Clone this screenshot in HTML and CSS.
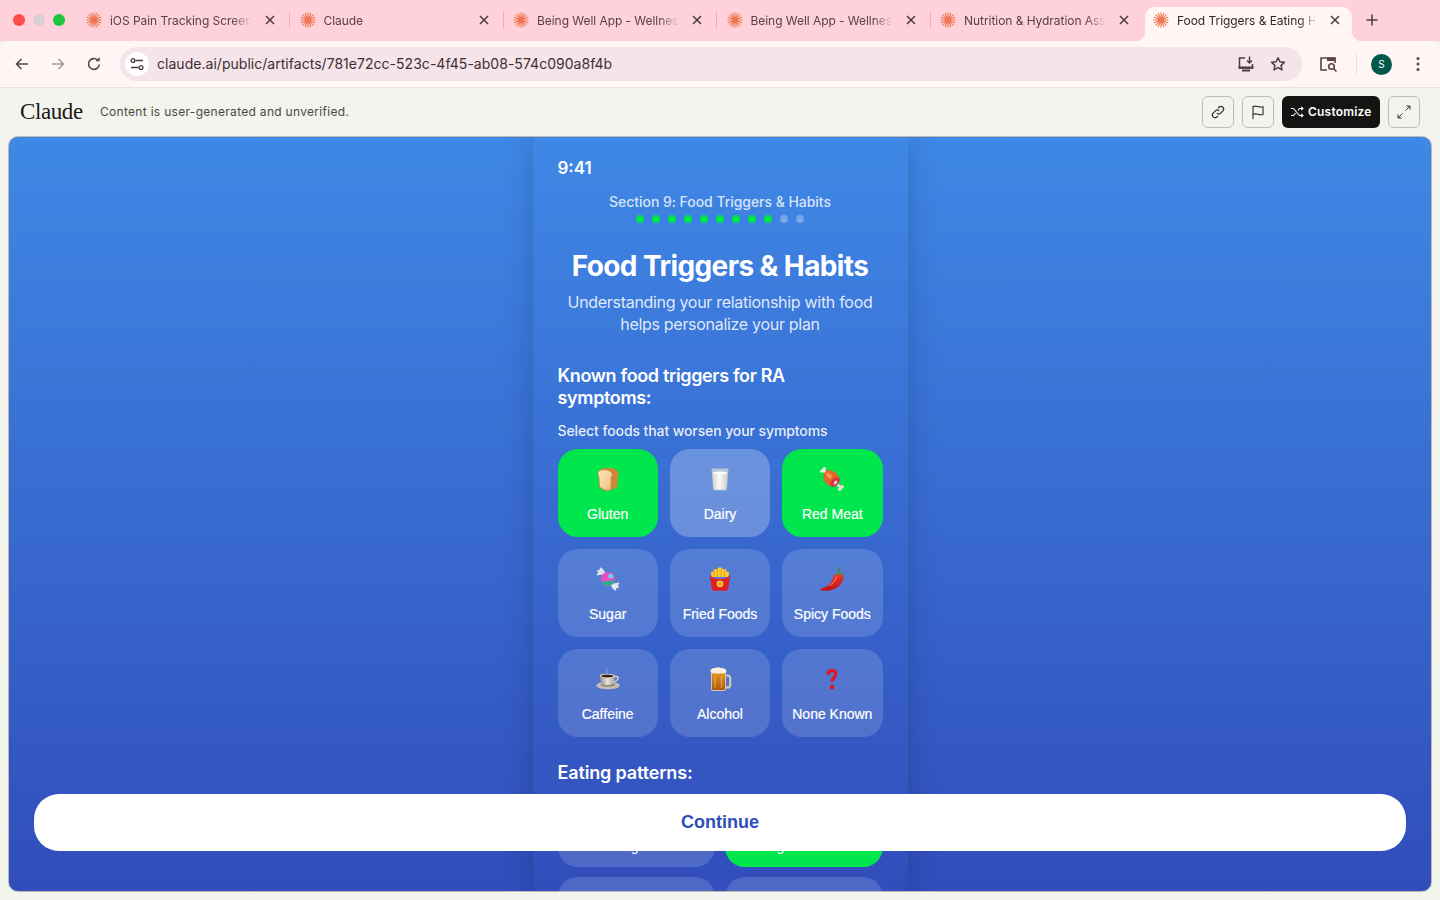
FILE: index.html
```html
<!DOCTYPE html>
<html lang="en">
<head>
    <meta charset="UTF-8">
    <meta name="viewport" content="width=device-width, initial-scale=1.0">
    <title>Food Triggers &amp; Eating Habits</title>
    <link rel="stylesheet" href="styles.css">
</head>
<body>
    <!-- Icon sprite -->
    <svg class="sprite" width="0" height="0" aria-hidden="true">
        <defs>
            <linearGradient id="bread-g" x1="0" y1="0" x2="1" y2="1">
                <stop offset="0" stop-color="#fdeac4"/>
                <stop offset="1" stop-color="#edbd78"/>
            </linearGradient>
            <linearGradient id="beer-g" x1="0" y1="0" x2="0" y2="1">
                <stop offset="0" stop-color="#e8981f"/>
                <stop offset="1" stop-color="#a8560c"/>
            </linearGradient>
            <linearGradient id="milk-g" x1="0" y1="0" x2="1" y2="0">
                <stop offset="0" stop-color="#d6d3c9"/>
                <stop offset=".45" stop-color="#fbfaf4"/>
                <stop offset="1" stop-color="#cfccc2"/>
            </linearGradient>
            <linearGradient id="chili-g" x1="0" y1="0" x2="0" y2="1">
                <stop offset="0" stop-color="#f0392a"/>
                <stop offset="1" stop-color="#c21216"/>
            </linearGradient>
            <linearGradient id="cup-g" x1="0" y1="0" x2="1" y2="0">
                <stop offset="0" stop-color="#8f8c84"/>
                <stop offset=".5" stop-color="#e4e1d9"/>
                <stop offset="1" stop-color="#a7a49b"/>
            </linearGradient>
        </defs>
        <symbol id="spark" viewBox="0 0 16 16">
            <g stroke="#ee7650" stroke-width="1.100" stroke-linecap="round">
                <path d="M8 .8v14.400M.8 8h14.400M2.900 2.900l10.200 10.200M13.100 2.900L2.900 13.100M5.200 1.300l5.600 13.400M10.800 1.300L5.200 14.700M1.300 5.200l13.400 5.600M14.700 5.200L1.300 10.800"/>
            </g>
            <circle cx="8" cy="8" r="1" fill="#ee7650"/>
        </symbol>
        <symbol id="x" viewBox="0 0 12 12">
            <path d="M2 2l8 8M10 2l-8 8" stroke="#4d3a40" stroke-width="1.500" fill="none"/>
        </symbol>
        <symbol id="bread" viewBox="0 0 24 24">
            <path d="M1.500 6C1.500 3 6 1 12 1c6 0 10.800 2 10.800 5.500 0 1.500-.5 2.500-1 3.500l-.5 9c0 1.500-1 2.200-2 2.500l-8 2.400c-1 .3-2 .1-3-.4l-3.800-2c-1-.5-1.500-1-1.500-2L2.500 10C2 9 1.500 7.500 1.500 6z" fill="#cf873a"/>
            <path d="M2.300 6.500c0-2 2.500-3.200 6-3.200 4.500 0 7.500 1.700 7.500 4 0 1.300-.5 2.200-1 3l-.3 12.200-3 .7c-1 .2-1.700 0-2.500-.4l-3.800-2c-.8-.4-1.200-.9-1.200-1.800L3.300 10c-.6-1-1-2.200-1-3.500z" fill="url(#bread-g)"/>
        </symbol>
        <symbol id="milk" viewBox="0 0 24 24">
            <path d="M3.500 1.500h17l-1.600 20.500c-.1 1-.8 1.500-1.800 1.500H6.900c-1 0-1.700-.5-1.800-1.500z" fill="#c3ced9" opacity=".85"/>
            <path d="M4.500 5.500c5 1.200 10 1.200 15 0l-1.300 16c-.1.700-.5 1-1.200 1H7c-.7 0-1.100-.3-1.200-1z" fill="url(#milk-g)"/>
            <ellipse cx="12" cy="5.800" rx="7.500" ry="1.300" fill="#fff"/>
        </symbol>
        <symbol id="meat" viewBox="0 0 24 24">
            <path d="M4 4l4 4" stroke="#ece7dd" stroke-width="2.600" stroke-linecap="round"/>
            <circle cx="1.900" cy="4" r="1.800" fill="#efeae0"/>
            <circle cx="4.300" cy="1.800" r="1.800" fill="#efeae0"/>
            <path d="M16 16l4 4" stroke="#e2ddd2" stroke-width="2.600" stroke-linecap="round"/>
            <circle cx="22.100" cy="19.900" r="1.800" fill="#e6e1d6"/>
            <circle cx="19.800" cy="22.200" r="1.800" fill="#e6e1d6"/>
            <ellipse cx="11.300" cy="11.300" rx="9" ry="7.200" transform="rotate(45 11.300 11.300)" fill="#e8652a"/>
            <ellipse cx="9" cy="8.500" rx="3.500" ry="2" transform="rotate(45 9 8.500)" fill="#f39a52"/>
            <ellipse cx="15" cy="15" rx="3.300" ry="5.800" transform="rotate(45 15 15)" fill="#d5304c"/>
            <ellipse cx="15.500" cy="15.500" rx="1.400" ry="2.300" transform="rotate(45 15.500 15.500)" fill="#f1cfc9"/>
        </symbol>
        <symbol id="candy" viewBox="0 0 24 24">
            <path d="M10 7L.5 8.500 2 5.500.8 3.200 3.500 3l.7-2.700L7 2z" fill="#dde4ef"/>
            <path d="M14 17l9.500-1.500-1.500 3 1.200 2.300-2.700.2-.7 2.700L17 22z" fill="#e3e8f1"/>
            <circle cx="12" cy="12" r="7" fill="#e64dc4"/>
            <path d="M5.400 14.300a7 7 0 0 0 13.400-1.500c-4 1.600-9 2-13.400 1.500z" fill="#24b487"/>
            <circle cx="14.800" cy="9.200" r="2.500" fill="#67d4ea"/>
        </symbol>
        <symbol id="fries" viewBox="0 0 24 24">
            <path d="M3.500 10L3 5l2.500-.5L6 2l3 .5L10 .5h3.500l1.500 2 3-.5.500 2.500 2.500.5-.5 5z" fill="#fbcb33"/>
            <path d="M6 3v7M9.500 2v8M13 1.500V10M16.500 3v7" stroke="#e39c1c" stroke-width=".9"/>
            <path d="M2 8.500c2.200 2.300 5.500 3.500 10 3.500s7.800-1.200 10-3.500l-1.600 13c-.2 1.500-1.200 2.300-2.400 2.300H6c-1.200 0-2.200-.8-2.400-2.300z" fill="#db1f26"/>
            <circle cx="12" cy="16.800" r="3.400" fill="#f9c62c"/>
            <circle cx="12" cy="16.800" r="1.500" fill="#ee8f1c"/>
        </symbol>
        <symbol id="chili" viewBox="0 0 24 24">
            <path d="M19.500 6c-.3-2 0-3.500-1.200-5.500" stroke="#3f8a3a" stroke-width="1.900" fill="none" stroke-linecap="round"/>
            <path d="M15 7.500c1.500-2.200 6.500-2.500 8 .5 1 2.500 0 6.500-3 10-3.500 4-10.500 6.800-18.500 5.500-1.300-.3-1.500-1.200-.6-1.700 4.500-1.500 9-4 10.800-8 1-2.200 1.800-4.500 3.300-6.300z" fill="url(#chili-g)"/>
            <path d="M16 6.800c1.500-1.800 5-1.800 6.500 0-.5 1.200-2 .8-3 .6-1 .5-2.500 1-3.500-.6z" fill="#4c9a3f"/>
            <path d="M16.500 10c-1 3-3 6-7 8.500" stroke="#fff" stroke-opacity=".35" stroke-width="1.200" fill="none" stroke-linecap="round"/>
        </symbol>
        <symbol id="coffee" viewBox="0 0 24 24">
            <ellipse cx="12" cy="18.500" rx="11.800" ry="3.800" fill="#c3c0b7"/>
            <ellipse cx="12" cy="17.800" rx="7.500" ry="1.900" fill="#8e8b83"/>
            <path d="M18 9.500h2.500c2.300 0 2.700 4.500-3.800 5.500" stroke="#d8d5cd" stroke-width="1.500" fill="none"/>
            <path d="M3.800 8.500h15c0 4-1 9-5 9.500H8.800C4.800 17.500 3.800 12.500 3.800 8.500z" fill="url(#cup-g)"/>
            <ellipse cx="11.300" cy="8.800" rx="7.500" ry="2.100" fill="#e8e5de"/>
            <ellipse cx="11.300" cy="9" rx="6.200" ry="1.500" fill="#33201a"/>
            <path d="M11 1.500c-1.500 1.500 1 2.500 0 5" stroke="#fff" stroke-opacity=".35" stroke-width="1" fill="none"/>
        </symbol>
        <symbol id="beer" viewBox="0 0 24 24">
            <path d="M16.500 8.500h3c1.700 0 2.700 1 2.700 2.700v6.500c0 1.700-1 2.800-2.700 2.800h-3" stroke="#cfc8b4" stroke-width="2.200" fill="none"/>
            <rect x="3" y="4" width="15" height="20" rx="2" fill="#cfc9b8"/>
            <rect x="4" y="5" width="13" height="18" rx="1.500" fill="url(#beer-g)"/>
            <path d="M2.500 4C2.500 2 5 .8 7 1.100c1.500-1.100 4.500-1.100 6 0 2.500-.3 5.300.9 5.300 2.900 0 1.600-1.300 2.500-2.800 2.200-1 .6-2.200.6-3.200 0-1 .7-3 .7-4 .1-1 .4-2 .3-2.500-.1C3.500 6.500 2.500 5.500 2.500 4z" fill="#f7f0dc"/>
            <path d="M7 9v12M13.500 9v12" stroke="#f8d38a" stroke-opacity=".5" stroke-width="1.300"/>
        </symbol>
        <symbol id="question" viewBox="0 0 24 24">
            <path d="M8.200 7.800C8.200 5 9.800 3.500 12 3.500s3.800 1.400 3.800 3.600c0 3.400-3.800 3.700-3.800 7.400" stroke="#e8101c" stroke-width="3.200" fill="none"/>
            <circle cx="12" cy="20" r="2.200" fill="#e8101c"/>
        </symbol>
    </svg>

    <!-- Browser chrome -->
    <div class="tabstrip">
        <div class="traffic">
            <span class="light light-red"></span>
            <span class="light light-gray"></span>
            <span class="light light-green"></span>
        </div>
        <div class="tab">
            <svg class="favicon"><use href="#spark"/></svg>
            <span class="tab-title">iOS Pain Tracking Screen</span>
            <svg class="tab-close"><use href="#x"/></svg>
        </div>
        <span class="tab-sep"></span>
        <div class="tab">
            <svg class="favicon"><use href="#spark"/></svg>
            <span class="tab-title">Claude</span>
            <svg class="tab-close"><use href="#x"/></svg>
        </div>
        <span class="tab-sep"></span>
        <div class="tab">
            <svg class="favicon"><use href="#spark"/></svg>
            <span class="tab-title">Being Well App - Wellnes</span>
            <svg class="tab-close"><use href="#x"/></svg>
        </div>
        <span class="tab-sep"></span>
        <div class="tab">
            <svg class="favicon"><use href="#spark"/></svg>
            <span class="tab-title">Being Well App - Wellnes</span>
            <svg class="tab-close"><use href="#x"/></svg>
        </div>
        <span class="tab-sep"></span>
        <div class="tab">
            <svg class="favicon"><use href="#spark"/></svg>
            <span class="tab-title">Nutrition &amp; Hydration Ass</span>
            <svg class="tab-close"><use href="#x"/></svg>
        </div>
        <span class="tab-gap"></span>
        <div class="tab tab-active">
            <svg class="favicon"><use href="#spark"/></svg>
            <span class="tab-title">Food Triggers &amp; Eating H</span>
            <svg class="tab-close"><use href="#x"/></svg>
        </div>
        <svg class="new-tab" width="14" height="14" viewBox="0 0 14 14">
            <path d="M7 1.500v11M1.500 7h11" stroke="#4d3a40" stroke-width="1.500"/>
        </svg>
    </div>

    <div class="toolbar">
        <svg class="nav-icon" width="16" height="16" viewBox="0 0 16 16">
            <path d="M14 8H2.500M7.500 3l-5 5 5 5" stroke="#5b4249" stroke-width="1.600" fill="none"/>
        </svg>
        <svg class="nav-icon" width="16" height="16" viewBox="0 0 16 16">
            <path d="M2 8h11.500M8.500 3l5 5-5 5" stroke="#a8979b" stroke-width="1.600" fill="none"/>
        </svg>
        <svg class="nav-icon" width="16" height="16" viewBox="0 0 16 16">
            <path d="M13.300 8.500A5.400 5.400 0 1 1 11.800 4.200" stroke="#5b4249" stroke-width="1.600" fill="none"/>
            <path d="M9.500 5.200h4.200V1z" fill="#5b4249"/>
        </svg>
        <div class="urlbar">
            <span class="site-info">
                <svg width="14" height="14" viewBox="0 0 14 14">
                    <path d="M5.500 3.500H13M1 10.500h7.500" stroke="#4d3a40" stroke-width="1.300"/>
                    <circle cx="3" cy="3.500" r="1.900" fill="none" stroke="#4d3a40" stroke-width="1.300"/>
                    <circle cx="11" cy="10.500" r="1.900" fill="none" stroke="#4d3a40" stroke-width="1.300"/>
                </svg>
            </span>
            <span class="url">claude.ai/public/artifacts/781e72cc-523c-4f45-ab08-574c090a8f4b</span>
            <svg class="url-install" width="18" height="18" viewBox="0 0 18 18">
                <path d="M8 3H2.500v10h13V9" stroke="#4d3a40" stroke-width="1.500" fill="none"/>
                <path d="M5 15.500h8M1.500 12.500h15" stroke="#4d3a40" stroke-width="2"/>
                <path d="M12.500 1.500v6M10 5.500l2.500 2.500L15 5.500" stroke="#4d3a40" stroke-width="1.500" fill="none"/>
            </svg>
            <svg class="url-star" width="16" height="16" viewBox="0 0 16 16">
                <path d="M8 1.700l1.900 4.100 4.500.5-3.300 3.100.9 4.500L8 11.600l-4 2.300.9-4.500L1.600 6.300l4.500-.5z" stroke="#4d3a40" stroke-width="1.500" fill="none" stroke-linejoin="round"/>
            </svg>
        </div>
        <svg class="side-search" width="20" height="18" viewBox="0 0 20 18">
            <path d="M8 15H2V3h14v5" stroke="#5b4249" stroke-width="1.600" fill="none"/>
            <path d="M8 2.500h8.500v3.500H8z" fill="#5b4249"/>
            <circle cx="12.500" cy="11.500" r="2.800" stroke="#5b4249" stroke-width="1.600" fill="none"/>
            <path d="M14.500 13.500l3 3" stroke="#5b4249" stroke-width="1.700"/>
        </svg>
        <span class="toolbar-sep"></span>
        <span class="avatar">S</span>
        <svg class="menu-dots" width="4" height="16" viewBox="0 0 4 16">
            <circle cx="2" cy="2.500" r="1.500" fill="#5b4249"/>
            <circle cx="2" cy="8" r="1.500" fill="#5b4249"/>
            <circle cx="2" cy="13.500" r="1.500" fill="#5b4249"/>
        </svg>
    </div>

    <!-- Artifact header -->
    <div class="artifact-bar">
        <span class="wordmark">Claude</span>
        <span class="notice">Content is user-generated and unverified.</span>
        <div class="artifact-actions">
            <button class="icon-btn">
                <svg width="16" height="16" viewBox="0 0 16 16">
                    <path d="M6.800 9.200a2.600 2.600 0 0 0 3.800 0l2.400-2.400a2.700 2.700 0 0 0-3.800-3.800L8 4.200M9.200 6.800a2.600 2.600 0 0 0-3.800 0L3 9.200a2.700 2.700 0 0 0 3.800 3.800L8 11.800" stroke="#2c2b28" stroke-width="1.200" fill="none"/>
                </svg>
            </button>
            <button class="icon-btn">
                <svg width="16" height="16" viewBox="0 0 16 16">
                    <path d="M3 15V2.500c3.500-1.500 6 1.500 10 .3v7.700c-4 1.200-6.500-1.800-10-.3" stroke="#2c2b28" stroke-width="1.100" fill="none"/>
                </svg>
            </button>
            <button class="customize-btn">
                <svg width="14" height="14" viewBox="0 0 14 14">
                    <path d="M1 3.500h2.500l6 7H13M1 10.500h2.500l2-2.300M8 5.300l1.500-1.800H13M11.200 1.800L13 3.500l-1.800 1.700M11.200 8.800l1.800 1.700-1.800 1.700" stroke="#fff" stroke-width="1.100" fill="none"/>
                </svg>
                <span>Customize</span>
            </button>
            <button class="icon-btn">
                <svg width="16" height="16" viewBox="0 0 16 16">
                    <path d="M9.500 6.500L14 2M10.500 2H14v3.500M6.500 9.500L2 14M2 10.500V14h3.500" stroke="#2c2b28" stroke-width="1" fill="none"/>
                </svg>
            </button>
        </div>
    </div>

    <!-- Artifact frame -->
    <div class="frame">
        <div class="phone">
            <div class="status-time">9:41</div>
            <div class="section-label">Section 9: Food Triggers &amp; Habits</div>
            <div class="progress">
                <span class="dot dot-done"></span>
                <span class="dot dot-done"></span>
                <span class="dot dot-done"></span>
                <span class="dot dot-done"></span>
                <span class="dot dot-done"></span>
                <span class="dot dot-done"></span>
                <span class="dot dot-done"></span>
                <span class="dot dot-done"></span>
                <span class="dot dot-done"></span>
                <span class="dot"></span>
                <span class="dot"></span>
            </div>
            <h1>Food Triggers &amp; Habits</h1>
            <p class="subtitle">Understanding your relationship with food helps personalize your plan</p>

            <h2>Known food triggers for RA symptoms:</h2>
            <p class="hint">Select foods that worsen your symptoms</p>
            <div class="food-grid">
                <div class="food selected">
                    <svg class="emoji"><use href="#bread"/></svg>
                    <span>Gluten</span>
                </div>
                <div class="food hovered">
                    <svg class="emoji"><use href="#milk"/></svg>
                    <span>Dairy</span>
                </div>
                <div class="food selected">
                    <svg class="emoji"><use href="#meat"/></svg>
                    <span>Red Meat</span>
                </div>
                <div class="food">
                    <svg class="emoji"><use href="#candy"/></svg>
                    <span>Sugar</span>
                </div>
                <div class="food">
                    <svg class="emoji"><use href="#fries"/></svg>
                    <span>Fried Foods</span>
                </div>
                <div class="food">
                    <svg class="emoji"><use href="#chili"/></svg>
                    <span>Spicy Foods</span>
                </div>
                <div class="food">
                    <svg class="emoji"><use href="#coffee"/></svg>
                    <span>Caffeine</span>
                </div>
                <div class="food">
                    <svg class="emoji"><use href="#beer"/></svg>
                    <span>Alcohol</span>
                </div>
                <div class="food">
                    <svg class="emoji"><use href="#question"/></svg>
                    <span>None Known</span>
                </div>
            </div>

            <h2 class="patterns-title">Eating patterns:</h2>
            <div class="pattern-grid">
                <div class="pattern">Eating often</div>
                <div class="pattern selected">Regular meals</div>
                <div class="pattern"></div>
                <div class="pattern"></div>
            </div>
        </div>
        <button class="continue-btn">Continue</button>
    </div>
</body>
</html>
```

FILE: styles.css
```css
* {
    box-sizing: border-box;
}
html, body {
    height: 100%;
}
body {
    margin: 0;
    overflow: hidden;
    font-family: Inter, "Noto Sans", sans-serif;
    background-color: #f4f4ee;
}
.sprite {
    position: absolute;
}

/* Browser chrome */
.tabstrip {
    display: flex;
    align-items: flex-end;
    height: 41px;
    background: #ffd1da;
}
.traffic {
    display: flex;
    gap: 8px;
    width: 78px;
    padding: 0 0 15px 13px;
    align-self: flex-end;
}
.light {
    width: 12px;
    height: 12px;
    border-radius: 50%;
}
.light-red { background: #ff4b4b; }
.light-gray { background: #d8d0d2; }
.light-green { background: #1fc63e; }
.tab {
    position: relative;
    display: flex;
    align-items: center;
    width: 207px;
    height: 34px;
    padding: 0 9px 8px 8px;
    font-size: 12px;
    color: #5a414a;
}
.tab-active {
    background: #fff6f5;
    border-radius: 10px 10px 0 0;
    color: #33262a;
}
.tab-active::before,
.tab-active::after {
    content: "";
    position: absolute;
    bottom: 0;
    width: 10px;
    height: 10px;
}
.tab-active::before {
    left: -10px;
    background: radial-gradient(circle at 0 0, transparent 10px, #fff6f5 10.5px);
}
.tab-active::after {
    right: -10px;
    background: radial-gradient(circle at 100% 0, transparent 10px, #fff6f5 10.5px);
}
.favicon {
    flex: none;
    width: 16px;
    height: 16px;
    margin-right: 8px;
}
.tab-title {
    flex: 1;
    min-width: 0;
    white-space: nowrap;
    letter-spacing: -0.05px;
    -webkit-mask-image: linear-gradient(to right, #000 122px, transparent 142px);
    mask-image: linear-gradient(to right, #000 122px, transparent 142px);
    -webkit-mask-size: 142px 100%;
    mask-size: 142px 100%;
    -webkit-mask-clip: no-clip;
    mask-clip: no-clip;
    -webkit-mask-repeat: no-repeat;
    mask-repeat: no-repeat;
}
.tab-close {
    flex: none;
    width: 12px;
    height: 12px;
    margin-left: 14px;
}
.tab-active .tab-close {
    margin-right: 2px;
}
.tab-sep {
    flex: none;
    width: 1px;
    height: 18px;
    margin: 0 1.5px 12px 4px;
    background: #fba9bb;
}
.tab-gap {
    flex: none;
    width: 6px;
}
.new-tab {
    margin: 0 0 14px 13px;
}
.toolbar {
    display: flex;
    align-items: center;
    height: 47px;
    padding-left: 14px;
    background: #fff6f5;
    border-bottom: 1px solid #f3dfdf;
    border-radius: 10px 10px 0 0;
}
.nav-icon {
    margin-right: 20px;
}
.nav-icon:nth-child(3) {
    margin-right: 18px;
}
.urlbar {
    display: flex;
    align-items: center;
    width: 1182px;
    height: 34px;
    padding: 0 16px 0 5px;
    border-radius: 17px;
    background: #f5e4ea;
}
.site-info {
    display: flex;
    align-items: center;
    justify-content: center;
    width: 24px;
    height: 24px;
    margin-right: 8px;
    border-radius: 50%;
    background: #fff;
}
.url {
    flex: 1;
    padding-bottom: 1px;
    font-size: 14px;
    letter-spacing: 0.03px;
    color: #3e2f33;
}
.url-install {
    margin-right: 15px;
}
.side-search {
    margin-left: 17px;
}
.toolbar-sep {
    width: 1px;
    height: 20px;
    margin: 0 14px 0 17px;
    background: #f6d9dd;
}
.avatar {
    display: flex;
    align-items: center;
    justify-content: center;
    width: 21px;
    height: 21px;
    border-radius: 50%;
    background: #00584a;
    color: #fff;
    font-size: 10px;
}
.menu-dots {
    margin-left: 24px;
}

/* Artifact header */
.artifact-bar {
    display: flex;
    align-items: center;
    height: 48px;
    padding: 0 20px;
    background: #f4f4ee;
}
.wordmark {
    width: 80px;
    font-family: "Liberation Serif", serif;
    font-size: 23px;
    color: #1b1a17;
    letter-spacing: -0.4px;
}
.notice {
    padding-bottom: 2px;
    font-size: 12px;
    letter-spacing: 0.3px;
    color: #4a4944;
}
.artifact-actions {
    display: flex;
    gap: 8px;
    margin-left: auto;
}
.icon-btn {
    display: flex;
    align-items: center;
    justify-content: center;
    width: 32px;
    height: 32px;
    padding: 0;
    border: 1px solid #bdbcb6;
    border-radius: 6px;
    background: transparent;
}
.customize-btn {
    display: flex;
    align-items: center;
    gap: 4px;
    width: 98px;
    height: 32px;
    padding: 0 0 0 8px;
    border: none;
    border-radius: 6px;
    background: #141412;
    color: #fff;
    font-family: Inter, sans-serif;
    font-size: 12px;
    font-weight: 600;
    letter-spacing: 0.2px;
}
.customize-btn span {
    padding-bottom: 1px;
}

/* Artifact frame */
.frame {
    position: relative;
    display: flex;
    justify-content: center;
    height: 756px;
    margin: 0 8px;
    overflow: hidden;
    border: 1px solid #b9b9b3;
    border-radius: 10px;
    background: linear-gradient(180deg, #3f88e6 0%, #314dbb 100%);
}
.phone {
    flex: none;
    width: 375px;
    height: 754px;
    padding: 21px 25px 0;
    overflow: hidden;
    color: #fff;
    box-shadow: 0 0 30px rgba(0, 0, 0, 0.18);
}
.status-time {
    font-size: 17px;
    font-weight: 600;
    line-height: 20px;
}
.section-label {
    margin-top: 15px;
    font-size: 14px;
    font-weight: 500;
    line-height: 17px;
    letter-spacing: -0.05px;
    text-align: center;
    color: rgba(255, 255, 255, 0.8);
}
.progress {
    display: flex;
    justify-content: center;
    gap: 8px;
    margin-top: 5px;
}
.dot {
    width: 8px;
    height: 8px;
    border-radius: 50%;
    background: rgba(255, 255, 255, 0.3);
}
.dot-done {
    background: #00e64d;
}
h1 {
    margin: 26px 0 0;
    font-size: 28px;
    font-weight: 700;
    line-height: 34px;
    letter-spacing: -0.6px;
    text-align: center;
}
.subtitle {
    margin: 8px 0 0;
    font-size: 16px;
    line-height: 22px;
    letter-spacing: -0.3px;
    text-align: center;
    color: rgba(255, 255, 255, 0.85);
}
h2 {
    margin: 30px 0 0;
    font-size: 18px;
    font-weight: 600;
    line-height: 21.6px;
    letter-spacing: -0.35px;
}
.hint {
    margin: 13.8px 0 0;
    font-size: 14px;
    font-weight: 500;
    line-height: 17px;
    letter-spacing: -0.1px;
    color: rgba(255, 255, 255, 0.9);
}
.food-grid {
    display: grid;
    grid-template-columns: repeat(3, 1fr);
    gap: 12px;
    margin-top: 10px;
}
.food {
    display: flex;
    flex-direction: column;
    align-items: center;
    height: 88px;
    padding-top: 18px;
    border-radius: 20px;
    background: rgba(255, 255, 255, 0.15);
    font-family: "Liberation Sans", Arial, sans-serif;
    font-size: 14px;
    line-height: 17px;
    -webkit-text-stroke: 0.2px #fff;
}
.food.selected {
    background: #00e64d;
}
.food.hovered {
    background: rgba(255, 255, 255, 0.25);
}
.emoji {
    width: 24px;
    height: 24px;
    margin-bottom: 15px;
}
.patterns-title {
    margin-top: 25px;
    letter-spacing: -0.15px;
}
.pattern-grid {
    display: grid;
    grid-template-columns: repeat(2, 1fr);
    gap: 10px;
    margin-top: 41.4px;
}
.pattern {
    display: flex;
    align-items: center;
    justify-content: center;
    height: 42px;
    border-radius: 20px;
    background: rgba(255, 255, 255, 0.15);
    font-family: "Liberation Sans", Arial, sans-serif;
    font-size: 14px;
}
.pattern.selected {
    background: #00e64d;
}
.continue-btn {
    position: absolute;
    left: 25px;
    right: 25px;
    top: 657px;
    height: 57px;
    border: none;
    border-radius: 25px;
    background: #fff;
    color: #2f4dbb;
    font-family: "Liberation Sans", Arial, sans-serif;
    font-size: 18px;
    font-weight: 700;
}
```
